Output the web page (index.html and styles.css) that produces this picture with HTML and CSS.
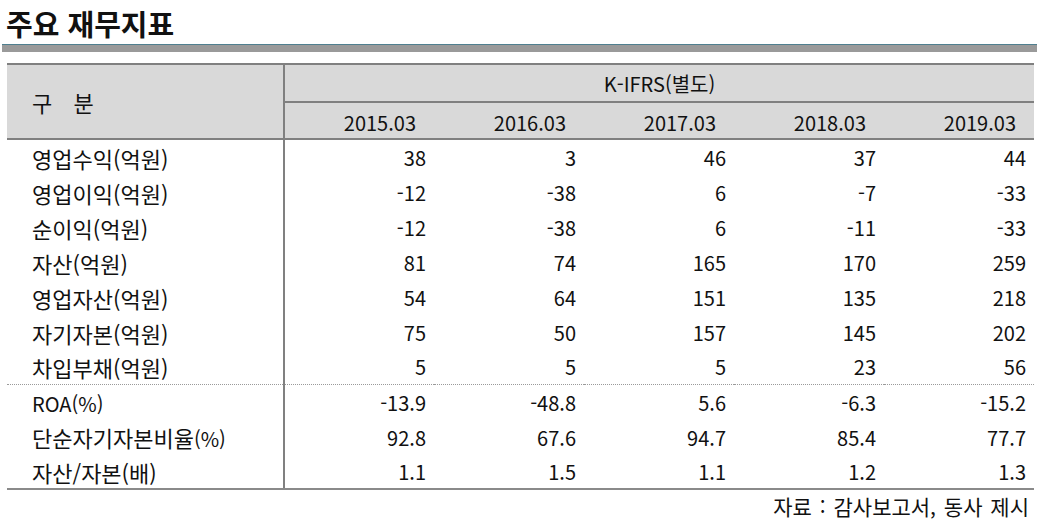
FILE: index.html
```html
<!DOCTYPE html>
<html lang="ko">
<head>
<meta charset="utf-8">
<link rel="stylesheet" href="styles.css">
</head>
<body>
<div class="page">
  <h1 class="title">주요 재무지표</h1>
  <div class="rule"></div>
  <table class="fin">
    <thead>
      <tr class="h1">
        <th class="label" rowspan="2">구 분</th>
        <th class="group" colspan="5">K-IFRS(별도)</th>
      </tr>
      <tr class="h2">
        <th class="year">2015.03</th>
        <th class="year">2016.03</th>
        <th class="year">2017.03</th>
        <th class="year">2018.03</th>
        <th class="year">2019.03</th>
      </tr>
    </thead>
    <tbody class="g1">
      <tr><td class="name">영업수익(억원)</td><td>38</td><td>3</td><td>46</td><td>37</td><td>44</td></tr>
      <tr><td class="name">영업이익(억원)</td><td>-12</td><td>-38</td><td>6</td><td>-7</td><td>-33</td></tr>
      <tr><td class="name">순이익(억원)</td><td>-12</td><td>-38</td><td>6</td><td>-11</td><td>-33</td></tr>
      <tr><td class="name">자산(억원)</td><td>81</td><td>74</td><td>165</td><td>170</td><td>259</td></tr>
      <tr><td class="name">영업자산(억원)</td><td>54</td><td>64</td><td>151</td><td>135</td><td>218</td></tr>
      <tr><td class="name">자기자본(억원)</td><td>75</td><td>50</td><td>157</td><td>145</td><td>202</td></tr>
      <tr class="last"><td class="name">차입부채(억원)</td><td>5</td><td>5</td><td>5</td><td>23</td><td>56</td></tr>
    </tbody>
    <tbody class="g2">
      <tr><td class="name"><span class="lat">ROA(%)</span></td><td>-13.9</td><td>-48.8</td><td>5.6</td><td>-6.3</td><td>-15.2</td></tr>
      <tr><td class="name">단순자기자본비율<span class="lat">(%)</span></td><td>92.8</td><td>67.6</td><td>94.7</td><td>85.4</td><td>77.7</td></tr>
      <tr><td class="name">자산/자본(배)</td><td>1.1</td><td>1.5</td><td>1.1</td><td>1.2</td><td>1.3</td></tr>
    </tbody>
  </table>
  <p class="source">자료 : 감사보고서, 동사 제시</p>
</div>
</body>
</html>
```

FILE: styles.css
```css
* { box-sizing: border-box; }
html, body { margin: 0; padding: 0; background: #fff; }
body {
  font-family: "Noto Sans CJK KR", "Noto Sans", sans-serif;
  color: #111;
}
.page { width: 1041px; }
.title {
  margin: 0;
  padding: 4px 0 0 6px;
  height: 44px;
  font-size: 29px;
  line-height: 38px;
  font-weight: 700;
  color: #111;
}
.rule {
  margin: 0 4px 0 2px;
  height: 8px;
  border-top: 1px solid #4f7f8f;
  background: #9a9a9a;
}
.fin {
  margin: 11px 0 0 7px;
  width: 1027px;
  border-collapse: collapse;
  table-layout: fixed;
  font-size: 20px;
}
.fin th, .fin td {
  padding: 0;
  font-weight: 400;
}
.fin thead th {
  background: #d9d9d9;
}
.fin .h1 th { height: 36px; border-top: 2px solid #808080; }
.fin .h1 .group {
  text-align: center;
  border-bottom: 2px solid #808080;
  line-height: 34px;
  padding-top: 2px;
}
.fin .label {
  width: 277px;
  text-align: left;
  padding-left: 25px;
  font-size: 22px;
  word-spacing: 15px;
  border-right: 2px solid #808080;
  border-bottom: 2px solid #808080;
  vertical-align: middle;
  padding-top: 0;
}
.fin .h2 th {
  height: 37px;
  text-align: right;
  padding-right: 18px;
  padding-top: 4px;
  border-bottom: 2px solid #808080;
}
.fin td {
  height: 35px;
  text-align: right;
  padding-right: 8px;
  padding-top: 2px;
  line-height: 30px;
}
.fin td.name {
  text-align: left;
  padding-left: 25px;
  font-size: 22px;
  border-right: 2px solid #808080;
}
.fin td.name .lat { font-size: 20px; }
.fin .g1 tr.last td { border-bottom: 1px dotted #9a9a9a; }
.fin .g2 tr:last-child td { border-bottom: 2px solid #8a8a8a; }
.source {
  margin: 2px 0 0 0;
  width: 1029px;
  text-align: right;
  font-size: 21px;
  word-spacing: 2px;
  line-height: 28px;
  color: #111;
}
```
